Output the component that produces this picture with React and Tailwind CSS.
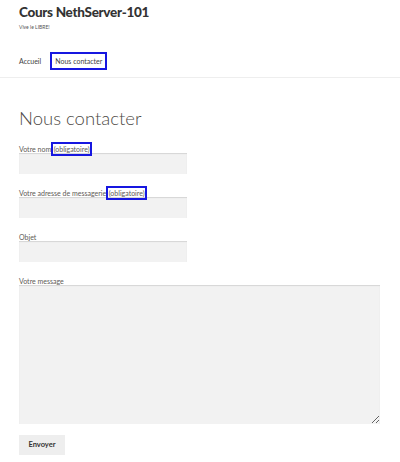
// ─── Contact page (Storefront-like) ─────────────────────────────────────────

const font = { fontFamily: 'Lato, "Open Sans", "Liberation Sans", sans-serif' };

function Label({ text, required }) {
  return (
    <label className="block h-[8px] text-[7px] leading-[8px] text-[#5e5a56] whitespace-nowrap">
      {text}
      {required && (
        <span className="border-2 border-[#1717e0] px-[0.5px] py-[1px]">(obligatoire)</span>
      )}
    </label>
  );
}

function Field({ text, required, width = 'w-[168px]' }) {
  return (
    <div className="mb-[15px]">
      <Label text={text} required={required} />
      <input
        type="text"
        className={`block ${width} h-[21px] bg-[#f2f2f2] shadow-[inset_0_1px_1px_rgba(0,0,0,0.12)] outline-none`}
      />
    </div>
  );
}

export default function App() {
  return (
    <div className="w-[400px] h-[462px] bg-white overflow-hidden text-[#333]" style={font}>
      {/* Header */}
      <header className="border-b border-[#eeeeee] pb-[7px]">
        <div className="px-[19px] pt-[4px]">
          <h1 className="text-[13.5px] font-black leading-[17px] text-[#333] tracking-[-0.3px]">
            Cours NethServer-101
          </h1>
          <p className="text-[5px] leading-[6px] text-[#555] mt-[3px]">Vive le LIBRE!</p>
          <nav className="flex items-center mt-[22px] h-[18px] text-[7px] text-[#444]">
            <span>Accueil</span>
            <span className="ml-[9px] h-[18px] px-[3px] flex items-center border-2 border-[#1717e0]">
              Nous contacter
            </span>
          </nav>
        </div>
      </header>

      {/* Content */}
      <main className="px-[19px] pt-[29px]">
        <h2 className="text-[18.5px] font-light leading-[23px] text-[#4e4a46] mb-[15px]">
          Nous contacter
        </h2>

        <Field text="Votre nom" required />
        <Field text="Votre adresse de messagerie" required />
        <Field text="Objet" />

        <div>
          <Label text="Votre message" />
          <textarea className="block w-[361px] h-[139px] bg-[#f2f2f2] shadow-[inset_0_1px_1px_rgba(0,0,0,0.12)] outline-none resize" />
        </div>

        <button className="mt-[11px] w-[46px] h-[20px] bg-[#eeeeee] text-[7.5px] font-bold text-[#333]">
          Envoyer
        </button>
      </main>
    </div>
  );
}
